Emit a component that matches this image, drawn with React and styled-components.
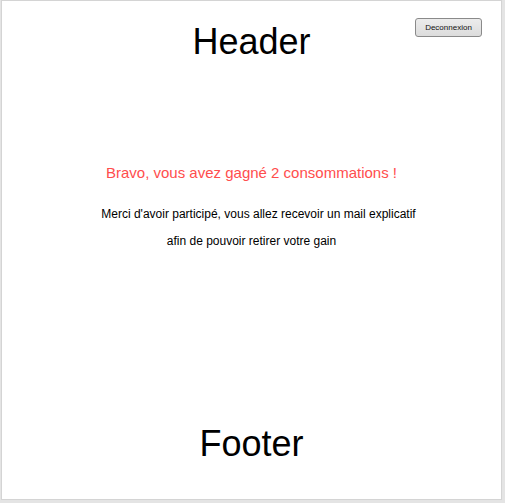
import React from "react";
import styled, { createGlobalStyle } from "styled-components";

const GlobalStyle = createGlobalStyle`
  html, body {
    margin: 0;
    padding: 0;
    height: 100%;
    background: #e4e4e4;
    font-family: "Liberation Sans", Arial, sans-serif;
  }
  #root {
    height: 100%;
  }
`;

const Frame = styled.div`
  box-sizing: border-box;
  position: relative;
  height: calc(100% - 3px);
  margin: 0 3px 0 1px;
  background: white;
  border: 1px solid #d4d4d4;
  display: flex;
  flex-direction: column;
`;

const Header = styled.header`
  padding-top: 20px;
  text-align: center;
`;

const Title = styled.h1`
  margin: 0;
  font-size: 36px;
  font-weight: normal;
  line-height: 41px;
  color: #000;
`;

const LogoutButton = styled.button`
  position: absolute;
  top: 17px;
  right: 19px;
  width: 67px;
  height: 19px;
  padding: 0;
  font-family: "Liberation Sans", Arial, sans-serif;
  font-size: 8px;
  color: #111;
  background: linear-gradient(#ececec, #dcdcdc);
  border: 1px solid #8a8a8a;
  border-radius: 3px;
`;

const Main = styled.main`
  flex: 1;
  padding-top: 102px;
  text-align: center;
`;

const Win = styled.h3`
  margin: 0 0 19px;
  font-size: 15px;
  font-weight: normal;
  line-height: 18px;
  color: #ff4d4d;
`;

const Info = styled.p`
  margin: 0;
  padding-left: ${(p) => (p.$shift ? "14px" : "0")};
  font-size: 12px;
  line-height: 27px;
  color: #000;
`;

const Footer = styled.footer`
  padding-bottom: 35px;
  text-align: center;
`;

export default function App() {
  return (
    <>
      <GlobalStyle />
      <Frame>
        <Header>
          <Title>Header</Title>
        </Header>
        <LogoutButton>Deconnexion</LogoutButton>
        <Main>
          <Win>Bravo, vous avez gagné 2 consommations !</Win>
          <Info $shift>Merci d'avoir participé, vous allez recevoir un mail explicatif</Info>
          <Info>afin de pouvoir retirer votre gain</Info>
        </Main>
        <Footer>
          <Title as="div">Footer</Title>
        </Footer>
      </Frame>
    </>
  );
}
